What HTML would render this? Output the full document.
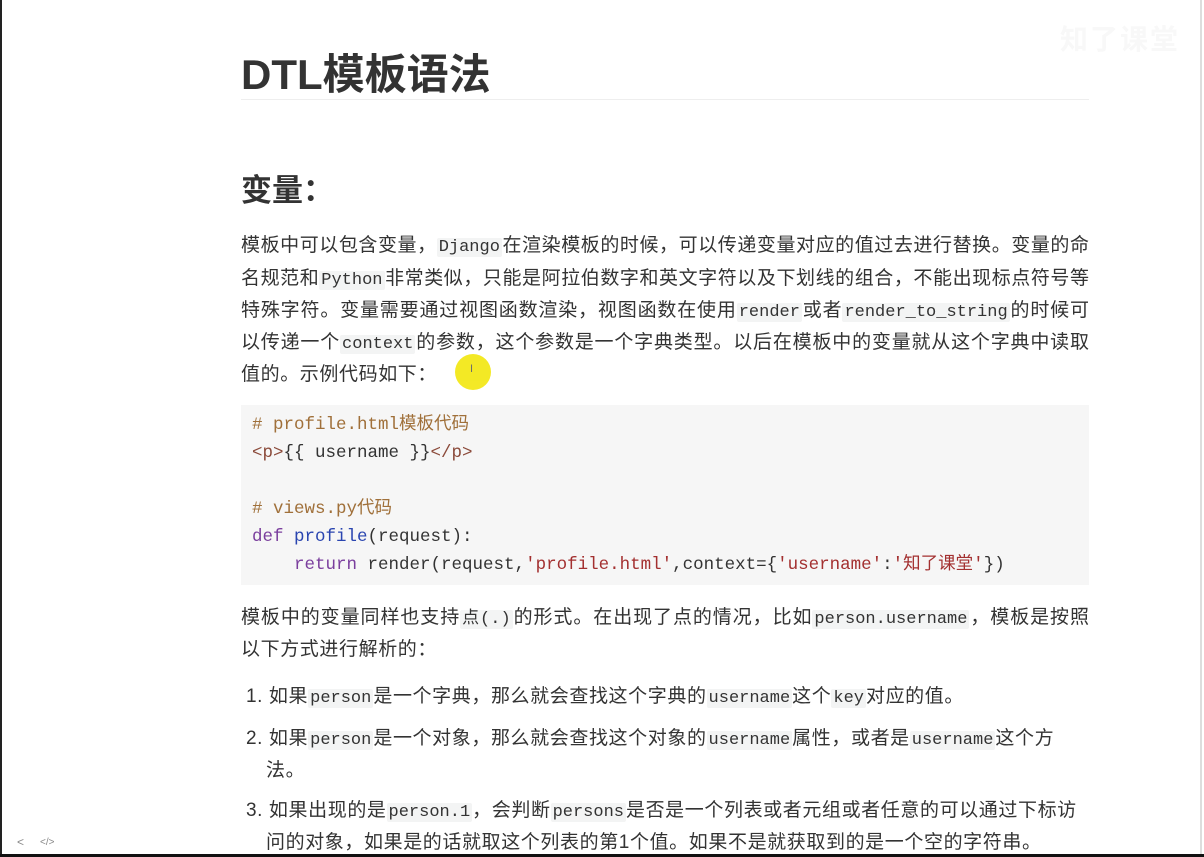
<!DOCTYPE html>
<html><head><meta charset="utf-8"><style>
html,body{margin:0;padding:0;}
body{width:1204px;height:857px;background:#fff;position:relative;overflow:hidden;font-family:"Liberation Sans","Noto Sans CJK SC",sans-serif;color:#333;}
.frame{position:absolute;left:0;top:0;width:1202px;height:854px;border-left:2px solid #222;border-right:2px solid #ddd;box-sizing:border-box;}
.bot{position:absolute;left:0;top:854px;width:1204px;height:3px;background:#111;}
.ln{position:absolute;left:241px;width:848px;font-size:19px;line-height:24px;white-space:nowrap;text-align:justify;text-align-last:justify;color:#333;}
.ln.l{text-align-last:left;letter-spacing:0.6px;}
code{font-family:"Liberation Mono","Noto Sans CJK SC",monospace;font-size:17px;background:#f3f4f4;padding:0 2px;border-radius:2px;color:#333;letter-spacing:0;}
h1{position:absolute;left:241px;top:48px;margin:0;font-size:42px;font-weight:bold;color:#333;line-height:54px;}
.hr{position:absolute;left:241px;top:99px;width:848px;height:1px;background:#eee;}
h2{position:absolute;left:241px;top:171px;margin:0;font-size:31px;font-weight:bold;color:#333;line-height:40px;}
.code{position:absolute;left:241px;top:405px;width:848px;height:180px;background:#f6f6f6;}
.cl{position:absolute;left:252px;font-family:"Liberation Mono","Noto Sans CJK SC",monospace;font-size:17.5px;line-height:24px;white-space:pre;color:#333;}
.cm{color:#a0703a;} .kw{color:#7a3e9d;} .fn{color:#2a45b0;} .st{color:#a33030;} .tg{color:#8b4a3a;}
.dot{position:absolute;left:455px;top:354px;width:36px;height:36px;border-radius:50%;background:#f3e81a;opacity:.95;}
.dot span{position:absolute;left:15px;top:9px;font-size:11px;color:#666;}
.wm{position:absolute;left:1060px;top:18px;font-size:28px;color:#f8f8f8;font-weight:bold;letter-spacing:2px;}
.ic{position:absolute;top:835px;font-size:12px;color:#888;}
</style></head><body>
<div class="frame"></div>
<div class="wm">知了课堂</div>
<h1>DTL模板语法</h1>
<div class="hr"></div>
<h2>变量：</h2>
<div class="ln" style="top:234px">模板中可以包含变量，<code>Django</code>在渲染模板的时候，可以传递变量对应的值过去进行替换。变量的命</div>
<div class="ln" style="top:267px">名规范和<code>Python</code>非常类似，只能是阿拉伯数字和英文字符以及下划线的组合，不能出现标点符号等</div>
<div class="ln" style="top:299px">特殊字符。变量需要通过视图函数渲染，视图函数在使用<code>render</code>或者<code>render_to_string</code>的时候可</div>
<div class="ln" style="top:331px">以传递一个<code>context</code>的参数，这个参数是一个字典类型。以后在模板中的变量就从这个字典中读取</div>
<div class="ln l" style="top:363px">值的。示例代码如下：</div>
<div class="dot"><span>I</span></div>
<div class="code"></div>
<div class="cl cm" style="top:413px"># profile.html模板代码</div>
<div class="cl" style="top:441px"><span class="tg">&lt;p&gt;</span>{{ username }}<span class="tg">&lt;/p&gt;</span></div>
<div class="cl cm" style="top:497px"># views.py代码</div>
<div class="cl" style="top:525px"><span class="kw">def</span> <span class="fn">profile</span>(request):</div>
<div class="cl" style="top:553px">    <span class="kw">return</span> render(request,<span class="st">'profile.html'</span>,context={<span class="st">'username'</span>:<span class="st">'知了课堂'</span>})</div>
<div class="ln" style="top:606px">模板中的变量同样也支持<code>点(.)</code>的形式。在出现了点的情况，比如<code>person.username</code>，模板是按照</div>
<div class="ln l" style="top:638px">以下方式进行解析的：</div>
<div class="ln l" style="top:685px;left:246px">1. 如果<code>person</code>是一个字典，那么就会查找这个字典的<code>username</code>这个<code>key</code>对应的值。</div>
<div class="ln l" style="top:727px;left:246px">2. 如果<code>person</code>是一个对象，那么就会查找这个对象的<code>username</code>属性，或者是<code>username</code>这个方</div>
<div class="ln l" style="top:759px;left:266px">法。</div>
<div class="ln l" style="top:799px;left:246px">3. 如果出现的是<code>person.1</code>，会判断<code>persons</code>是否是一个列表或者元组或者任意的可以通过下标访</div>
<div class="ln l" style="top:831px;left:266px">问的对象，如果是的话就取这个列表的第1个值。如果不是就获取到的是一个空的字符串。</div>
<div class="ic" style="left:17px">&lt;</div>
<div class="ic" style="left:40px;font-size:10px;top:837px">&lt;/&gt;</div>
<div class="bot"></div>
</body></html>
